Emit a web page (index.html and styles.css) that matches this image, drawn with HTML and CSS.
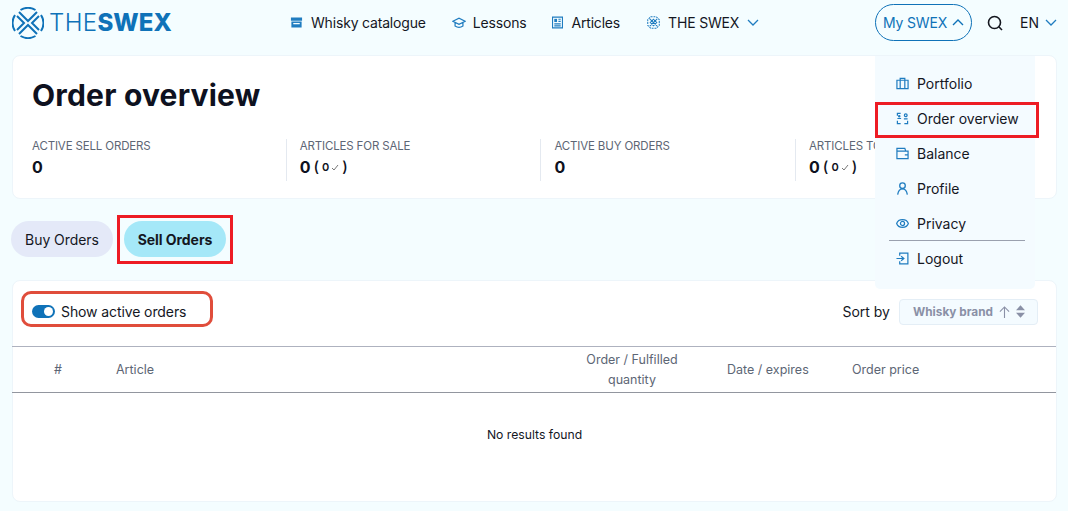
FILE: index.html
```html
<!DOCTYPE html>
<html lang="en">
<head>
    <meta charset="UTF-8">
    <meta name="viewport" content="width=device-width, initial-scale=1.0">
    <title>Order overview</title>
    <link rel="stylesheet" href="styles.css">
</head>
<body>
    <header class="topbar">
        <a class="logo">
            <svg class="logo-mark" viewBox="0 0 32 32" fill="none" stroke="#0f72b8" stroke-width="2">
                <path d="M3 8A15 15 0 0 0 3 24M29 8A15 15 0 0 1 29 24M8.500 3A15 15 0 0 1 23.500 3M8.500 29A15 15 0 0 0 23.500 29"/>
                <path d="M7 5 16 14 25 5M7 27 16 18 25 27M5 9 12 16 5 23M27 9 20 16 27 23"/>
            </svg>
            <span class="logo-the">THE</span><span class="logo-swex">SWEX</span>
        </a>
        <nav class="main-nav">
            <a class="nav-link">
                <svg class="nav-icon" viewBox="0 0 14 14"><path fill="#1f7cc0" d="M1 1.500h12v3.500H1zM1.500 6H12.500V12.500H1.500z"/><path fill="#f5fdff" d="M3.500 7.500h7v1.400h-7z"/></svg>
                Whisky catalogue
            </a>
            <a class="nav-link">
                <svg class="nav-icon icon-wide" viewBox="0 0 16 14" fill="none" stroke="#1f7cc0" stroke-width="1.400"><path d="M1 5.500 8 2 15 5.500 8 9zM3.500 7V11Q8 14 12.500 11V7"/></svg>
                Lessons
            </a>
            <a class="nav-link">
                <svg class="nav-icon icon-narrow" viewBox="0 0 12 14" fill="none" stroke="#1f7cc0" stroke-width="1.200"><path d="M.6 1.100h10.800v11.800H.6zM2.500 8.500h7M2.500 10.700h7M7 3.500h2.500M7 5.800h2.500"/><path fill="#1f7cc0" stroke="none" d="M2.500 3h3v3.500h-3z"/></svg>
                Articles
            </a>
            <a class="nav-link">
                <svg class="nav-icon" viewBox="0 0 14 14" fill="none" stroke="#1f7cc0" stroke-width="1.100"><path stroke-dasharray="2 1" d="M4 .8h6L13.200 4V10L10 13.200H4L.8 10V4z"/><path d="M3 3 11 11M11 3 3 11M7 3.500 10.500 7 7 10.500 3.500 7z"/></svg>
                THE SWEX
                <svg class="chevron" viewBox="0 0 12 7" fill="none" stroke="#1f7cc0" stroke-width="1.300"><path d="M1 1 6 6 11 1"/></svg>
            </a>
        </nav>
        <div class="top-actions">
            <a class="my-swex">
                My SWEX
                <svg class="chevron" viewBox="0 0 12 7" fill="none" stroke="#0f72b8" stroke-width="1.400"><path d="M1 6 6 1 11 6"/></svg>
            </a>
            <svg class="search-icon" viewBox="0 0 16 16" fill="none" stroke="#14171f" stroke-width="1.600"><circle cx="7.500" cy="7.500" r="6"/><path d="M11.800 11.800 15 15"/></svg>
            <a class="lang">
                EN
                <svg class="chevron" viewBox="0 0 12 7" fill="none" stroke="#1f7cc0" stroke-width="1.300"><path d="M1 1 6 6 11 1"/></svg>
            </a>
        </div>
    </header>

    <ul class="account-menu">
        <li>
            <svg class="menu-icon" viewBox="0 0 14 14" fill="none" stroke="#1f7cc0" stroke-width="1.300"><path d="M1 3.500h12v9H1zM4.500 3.500V1.500h5v2M4.500 3.500v9M9.500 3.500v9"/></svg>
            Portfolio
        </li>
        <li>
            <svg class="menu-icon" viewBox="0 0 14 14" fill="none" stroke="#1f7cc0" stroke-width="1.300"><path d="M5 1.500H1.500V4M1.500 9.500V12.500H5M9 12.500H12.500V9.500M1.500 7H5.500M8.500 7.500H12.500"/><circle cx="10.500" cy="3.500" r="1.500"/><circle cx="3.500" cy="4.500" r=".7"/></svg>
            Order overview
        </li>
        <li>
            <svg class="menu-icon" viewBox="0 0 14 14" fill="none" stroke="#1f7cc0" stroke-width="1.300"><path d="M1 1.500h8.500l1 3h2.500v8H1zM1 4.500h9.500M9.500 8.500H13"/></svg>
            Balance
        </li>
        <li>
            <svg class="menu-icon" viewBox="0 0 14 14" fill="none" stroke="#1f7cc0" stroke-width="1.400"><circle cx="7" cy="4" r="3"/><path d="M1.800 13.500C2.500 9.500 4.500 7.500 7 7.500S11.500 9.500 12.200 13.500"/></svg>
            Profile
        </li>
        <li class="menu-sep">
            <svg class="menu-icon" viewBox="0 0 14 14" fill="none" stroke="#1f7cc0" stroke-width="1.300"><path d="M.7 7C2.500 1.500 11.500 1.500 13.300 7 11.500 12.500 2.500 12.500 .7 7z"/><circle cx="7" cy="7" r="2.200"/></svg>
            Privacy
        </li>
        <li>
            <svg class="menu-icon" viewBox="0 0 14 14" fill="none" stroke="#1f7cc0" stroke-width="1.300"><path d="M4 4V1.200h8.800v11.600H4V10M.5 7h8M5.500 4.500 8.500 7 5.500 9.500"/></svg>
            Logout
        </li>
    </ul>

    <main class="page">
        <section class="card summary">
            <h1>Order overview</h1>
            <div class="stats">
                <div class="stat">
                    <div class="stat-label">ACTIVE SELL ORDERS</div>
                    <div class="stat-value">0</div>
                </div>
                <div class="stat">
                    <div class="stat-label">ARTICLES FOR SALE</div>
                    <div class="stat-value">
                        <span>0</span>
                        <span class="paren">(</span>
                        <span class="fulfilled">0</span>
                        <svg class="tick" viewBox="0 0 8 7" fill="none" stroke="#777" stroke-width="1"><path d="M1 4 3 6 7 1"/></svg>
                        <span class="paren">)</span>
                    </div>
                </div>
                <div class="stat">
                    <div class="stat-label">ACTIVE BUY ORDERS</div>
                    <div class="stat-value">0</div>
                </div>
                <div class="stat">
                    <div class="stat-label">ARTICLES TO BUY</div>
                    <div class="stat-value">
                        <span>0</span>
                        <span class="paren">(</span>
                        <span class="fulfilled">0</span>
                        <svg class="tick" viewBox="0 0 8 7" fill="none" stroke="#777" stroke-width="1"><path d="M1 4 3 6 7 1"/></svg>
                        <span class="paren">)</span>
                    </div>
                </div>
            </div>
        </section>

        <div class="tabs">
            <button class="tab">Buy Orders</button>
            <button class="tab active">Sell Orders</button>
        </div>

        <section class="card orders">
            <div class="orders-toolbar">
                <label class="toggle-wrap">
                    <span class="toggle"></span>
                    Show active orders
                </label>
                <div class="sort">
                    <span>Sort by</span>
                    <div class="sort-select">
                        <b>Whisky brand</b>
                        <svg class="sort-arrow" viewBox="0 0 12 13" fill="none" stroke="#8a90a6" stroke-width="1.200"><path d="M6 13V1M1 6 6 1 11 6"/></svg>
                        <svg class="sort-caret" viewBox="0 0 10 14" fill="#8a90a6"><path d="M5 0 10 5.500H0zM5 14 0 8.500H10z"/></svg>
                    </div>
                </div>
            </div>
            <div class="table-head">
                <div class="col-num">#</div>
                <div class="col-article">Article</div>
                <div class="col-qty">Order / Fulfilled quantity</div>
                <div class="col-date">Date / expires</div>
                <div class="col-price">Order price</div>
            </div>
            <div class="empty">No results found</div>
        </section>
    </main>

    <!-- highlights drawn on top of the screenshot -->
    <div class="mark mark-menu"></div>
    <div class="mark mark-tab"></div>
    <div class="mark mark-toggle"></div>
</body>
</html>
```

FILE: styles.css
```css
* {
    box-sizing: border-box;
}
html, body {
    height: 511px;
    overflow: hidden;
}
body {
    font-family: Inter, "Open Sans", sans-serif;
    margin: 0;
    background-color: #f4fdff;
    color: #14171f;
    font-size: 14px;
    position: relative;
}
svg {
    display: block;
    flex: none;
}
.topbar {
    height: 45px;
    display: flex;
    align-items: center;
    padding-left: 12px;
}
.logo {
    display: flex;
    align-items: center;
    width: 278px;
    color: #0f72b8;
    font-size: 24px;
    line-height: 1;
}
.logo-mark {
    width: 32px;
    height: 32px;
    margin-right: 5px;
}
.logo-the {
    font-weight: 300;
    letter-spacing: .4px;
}
.logo-swex {
    font-weight: 800;
}
.main-nav {
    display: flex;
    align-items: center;
    gap: 26px;
    letter-spacing: -.18px;
}
.nav-link {
    display: flex;
    align-items: center;
    gap: 8px;
}
.nav-link:last-child {
    margin-left: 1px;
}
.nav-icon {
    width: 13px;
    height: 13px;
}
.icon-wide {
    width: 14px;
    margin-right: -1px;
}
.icon-narrow {
    width: 11px;
}
.chevron {
    width: 12px;
    height: 7px;
}
.top-actions {
    margin-left: auto;
    display: flex;
    align-items: center;
    padding-right: 11px;
}
.my-swex {
    display: flex;
    align-items: center;
    gap: 5px;
    width: 97px;
    height: 37px;
    margin-right: 15px;
    justify-content: center;
    border: 1.500px solid #0f72b8;
    border-radius: 19px;
    color: #0f72b8;
    letter-spacing: -.15px;
}
.search-icon {
    width: 16px;
    height: 16px;
    margin-right: 17px;
}
.lang {
    display: flex;
    align-items: center;
    gap: 6px;
}
.account-menu {
    position: absolute;
    top: 56px;
    left: 875px;
    width: 160px;
    height: 233px;
    margin: 0;
    padding: 10px 0 0;
    list-style: none;
    background: #f4fbff;
    border-radius: 0 0 5px 5px;
    z-index: 2;
}
.account-menu li {
    display: flex;
    align-items: center;
    gap: 8px;
    height: 35px;
    padding: 0 0 1px 21px;
}
.account-menu li.menu-sep {
    position: relative;
}
.account-menu li.menu-sep::after {
    content: "";
    position: absolute;
    left: 14px;
    right: 10px;
    bottom: 0;
    border-bottom: 1px solid #9aa0ae;
}
.menu-icon {
    width: 13px;
    height: 13px;
}
.page {
    padding: 10px 11px 0 12px;
}
.card {
    background: #fff;
    border: 1px solid #edf5fa;
    border-radius: 8px;
}
.summary {
    height: 144px;
    padding: 19px 19px 0;
}
h1 {
    margin: 0 0 24px;
    font-size: 30px;
    line-height: 40px;
    font-weight: 700;
    letter-spacing: .2px;
    color: #0e1120;
}
.stats {
    display: grid;
    grid-template-columns: 253.700px repeat(3, 254.700px);
}
.stat {
    height: 42px;
    padding-left: 13px;
    border-left: 1px solid #e4e9f0;
}
.stat:first-child {
    padding-left: 0;
    border-left: none;
}
.stat-label {
    font-size: 11.500px;
    letter-spacing: -.15px;
    line-height: 15px;
    color: #5d6675;
    white-space: nowrap;
}
.stat-value {
    display: flex;
    align-items: center;
    gap: 3px;
    margin-top: 3px;
    font-size: 16px;
    line-height: 20px;
    font-weight: 700;
    color: #0e1120;
}
.paren {
    font-size: 15px;
    font-weight: 500;
}
.fulfilled {
    font-size: 11px;
    font-weight: 600;
}
.tick {
    width: 8px;
    height: 7px;
    margin-left: -1px;
}
.tabs {
    display: flex;
    gap: 11px;
    margin-top: 22px;
    margin-bottom: 23px;
    margin-left: -1px;
}
.tab {
    height: 36px;
    width: 102px;
    padding: 0;
    border: none;
    border-radius: 18px;
    background: #e4e9f8;
    color: #14171f;
    font-family: inherit;
    font-size: 14px;
    letter-spacing: -.05px;
}
.tab.active {
    background: #a5e8f8;
    font-weight: 700;
}
.orders {
    height: 222px;
}
.orders-toolbar {
    height: 65px;
    display: flex;
    align-items: center;
    justify-content: space-between;
    padding: 0 18px 4px 19px;
}
.toggle-wrap {
    display: flex;
    align-items: center;
    gap: 6px;
    letter-spacing: -.1px;
}
.toggle {
    display: block;
    position: relative;
    width: 23px;
    height: 13px;
    border-radius: 7px;
    background: #0f72b8;
}
.toggle::after {
    content: "";
    position: absolute;
    top: 2px;
    right: 2px;
    width: 9px;
    height: 9px;
    border-radius: 50%;
    background: #fff;
}
.sort {
    display: flex;
    align-items: center;
    gap: 9px;
}
.sort-select {
    display: flex;
    align-items: center;
    width: 139px;
    height: 26px;
    padding-left: 13px;
    background: #f4fbff;
    border: 1px solid #e4eef6;
    border-radius: 4px;
    color: #8a90a6;
    font-size: 11.800px;
}
.sort-arrow {
    width: 11px;
    height: 12px;
    margin-left: 6px;
}
.sort-caret {
    width: 9px;
    height: 13px;
    margin-left: 6px;
}
.table-head {
    display: grid;
    grid-template-columns: 92px 468px 120px 125px 1fr;
    align-items: center;
    height: 47px;
    border-top: 1px solid #aeb2bf;
    border-bottom: 1px solid #92969f;
    margin-left: -1px;
    font-size: 12.500px;
    line-height: 20px;
    color: #5d6675;
}
.col-num {
    padding-left: 42px;
}
.col-article {
    padding-left: 12px;
}
.col-qty {
    text-align: center;
}
.col-date, .col-price {
    padding-left: 35px;
}
.empty {
    padding-top: 34px;
    text-align: center;
    font-size: 12.200px;
    line-height: 16px;
}
.mark {
    position: absolute;
    border: 3px solid #ed1c24;
    z-index: 3;
}
.mark-menu {
    left: 875px;
    top: 102px;
    width: 164px;
    height: 36px;
}
.mark-tab {
    left: 117px;
    top: 215px;
    width: 116px;
    height: 49px;
}
.mark-toggle {
    left: 21px;
    top: 291px;
    width: 192px;
    height: 36px;
    border-color: #e04d3b;
    border-radius: 10px;
}
```
